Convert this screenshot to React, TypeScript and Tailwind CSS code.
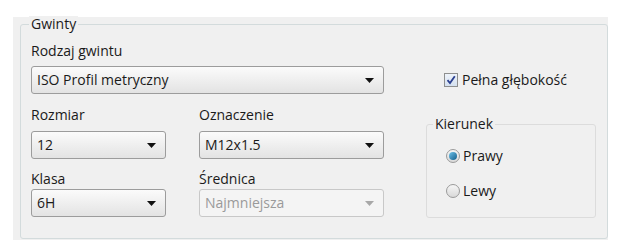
import React from "react";

const font = { fontFamily: '"Open Sans", "DejaVu Sans", sans-serif' };

const Combo = ({
  value,
  width,
  disabled,
}: {
  value: string;
  width: string;
  disabled?: boolean;
}) => (
  <div
    className={`${width} h-[28px] flex items-center justify-between rounded-[3px] border pl-[5px] pr-[9px] ${
      disabled
        ? "border-[#c8c8c8] bg-[#f4f4f4] text-[#9a9a9a]"
        : "border-[#9c9c9c] bg-gradient-to-b from-[#fbfbfb] to-[#e3e3e3] text-[#1a1a1a]"
    }`}
  >
    <span className="text-[14px] leading-none">{value}</span>
    <svg width="9" height="5" viewBox="0 0 9 5">
      <path d="M0 0h9L4.5 5z" fill={disabled ? "#a8a8a8" : "#111"} />
    </svg>
  </div>
);

const Radio = ({ checked, label }: { checked?: boolean; label: string }) => (
  <div className="flex items-center gap-[3px] h-[17px]">
    <div className="w-[14px] h-[14px] rounded-full border border-[#9a9a9a] bg-gradient-to-b from-[#f6f6f6] to-[#d9d9d9] flex items-center justify-center">
      {checked && (
        <div className="w-[8px] h-[8px] rounded-full bg-gradient-to-br from-[#6fc3ea] to-[#0d5f8c]" />
      )}
    </div>
    <span className="text-[14px] leading-[17px] text-[#1a1a1a]">{label}</span>
  </div>
);

export default function App() {
  return (
    <div className="w-[620px] h-[251px] bg-white pt-[17px] pl-[13px]" style={font}>
      <div className="w-[595px] h-[223px] bg-[#f0f0f0] pl-[7px] pt-[7px]">
        <div className="h-[215px] border border-[#d3dbdc] rounded-[3px]">
          <div className="flex -mt-[9px] h-[16px]">
            <div className="w-[8px] shrink-0" />
            <span className="px-[2px] bg-[#f0f0f0] text-[14px] leading-[16px] text-[#1a1a1a]">
              Gwinty
            </span>
          </div>
          <div className="flex pl-[10px]">
            <div className="w-[353px] flex flex-col text-[14px] text-[#1a1a1a]">
              <div className="mt-[10px] h-[17px] leading-[17px]">Rodzaj gwintu</div>
              <div className="mt-[7px]">
                <Combo value="ISO Profil metryczny" width="w-[353px]" />
              </div>
              <div className="flex mt-[12px] h-[17px] leading-[17px]">
                <span className="w-[168px]">Rozmiar</span>
                <span>Oznaczenie</span>
              </div>
              <div className="flex mt-[8px]">
                <div className="w-[168px]">
                  <Combo value="12" width="w-[135px]" />
                </div>
                <Combo value="M12x1.5" width="w-[185px]" />
              </div>
              <div className="flex mt-[11px] h-[17px] leading-[17px]">
                <span className="w-[168px]">Klasa</span>
                <span>Średnica</span>
              </div>
              <div className="flex mt-[2px]">
                <div className="w-[168px]">
                  <Combo value="6H" width="w-[135px]" />
                </div>
                <Combo value="Najmniejsza" width="w-[185px]" disabled />
              </div>
            </div>
            <div className="ml-[42px] flex flex-col">
              <div className="mt-[39px] ml-[18px] h-[17px] flex items-center gap-[4px]">
                <div className="w-[14px] h-[14px] border border-[#8e8f8f] bg-gradient-to-b from-[#eef3fa] to-[#d4e0ef] flex items-center justify-center">
                  <svg width="10" height="10" viewBox="0 0 10 10">
                    <path d="M1.5 5.2L4 8L8.8 1.2" fill="none" stroke="#2a3f8f" strokeWidth="1.8" />
                  </svg>
                </div>
                <span className="text-[14px] leading-[17px] text-[#1a1a1a]">Pełna głębokość</span>
              </div>
              <div className="mt-[36px] w-[170px] h-[94px] border border-[#dcdcdc] rounded-[3px]">
                <div className="flex -mt-[9px] h-[16px]">
                  <div className="w-[6px] shrink-0" />
                  <span className="px-[2px] bg-[#f0f0f0] text-[14px] leading-[16px] text-[#1a1a1a]">
                    Kierunek
                  </span>
                </div>
                <div className="mt-[15px] ml-[19px] flex flex-col gap-[18px]">
                  <Radio checked label="Prawy" />
                  <Radio label="Lewy" />
                </div>
              </div>
            </div>
          </div>
        </div>
      </div>
    </div>
  );
}
